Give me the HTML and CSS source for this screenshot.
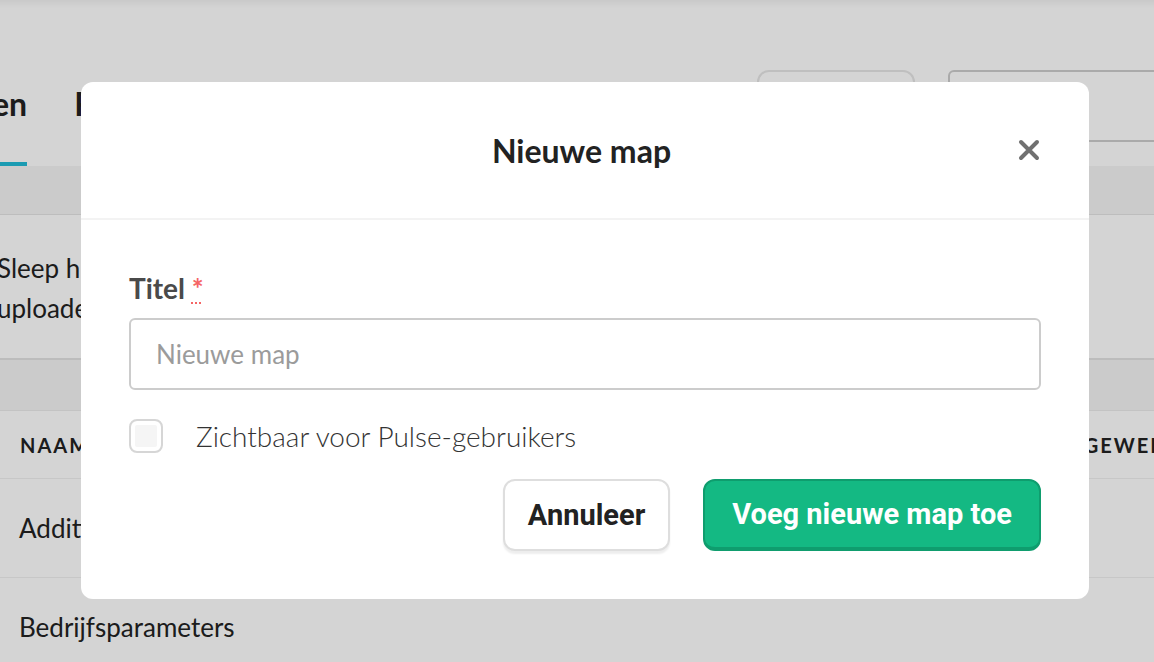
FILE: index.html
```html
<!DOCTYPE html>
<html lang="nl">
<head>
  <meta charset="UTF-8">
  <title>Nieuwe map</title>
  <link rel="stylesheet" href="styles.css">
</head>
<body>
  <div class="page">
    <header class="topbar">
      <nav class="tabs">
        <a class="tab active">en</a>
        <a class="tab">Formulieren</a>
      </nav>
      <div class="actions">
        <button class="ghost-btn" aria-label="Nieuwe map"></button>
        <input class="search" type="text">
      </div>
    </header>
    <div class="band"></div>
    <div class="dropzone">Sleep hier je bestanden naartoe om te<br>uploaden</div>
    <div class="band band-low"></div>
    <div class="table">
      <div class="row head">
        <span>Naam</span>
        <span>Laatst bijgewerkt</span>
      </div>
      <div class="row">
        <span>Additionele documenten</span>
        <span></span>
      </div>
      <div class="row">
        <span>Bedrijfsparameters</span>
        <span></span>
      </div>
    </div>
  </div>

  <div class="overlay">
    <div class="modal">
      <div class="modal-head">
        <h2>Nieuwe map</h2>
        <button class="close" aria-label="Sluiten">
          <svg width="22" height="22" viewBox="0 0 22 22"><path d="M3 3 L19 19 M19 3 L3 19" stroke="#707070" stroke-width="4" stroke-linecap="round"/></svg>
        </button>
      </div>
      <div class="modal-body">
        <label class="field-label" for="titel">Titel <abbr title="verplicht">*</abbr></label>
        <input id="titel" class="field" type="text" placeholder="Nieuwe map">
        <label class="check">
          <input type="checkbox">
          <span>Zichtbaar voor Pulse-gebruikers</span>
        </label>
        <div class="buttons">
          <button class="btn btn-cancel">Annuleer</button>
          <button class="btn btn-primary">Voeg nieuwe map toe</button>
        </div>
      </div>
    </div>
  </div>
</body>
</html>
```
FILE: styles.css
```css
html, body {
  margin: 0;
  height: 100%;
  overflow: hidden;
}

body {
  font-family: 'Lato', 'Open Sans', sans-serif;
  color: #222;
  background: #fff;
}

.page {width: 1180px;}

.topbar {
  display: flex;
  height: 166px;
}

.tabs {display: flex;margin-left: -8px;}

.tab {
  font-size: 32px;
  font-weight: 700;
  line-height: 40px;
  padding: 84px 0 38px;
  margin-right: 47px;
  border-bottom: 4px solid transparent;
  color: #222;
}
.tab.active {border-bottom-color: #21bbd6;}

.actions {
  margin-left: auto;
  display: flex;
  gap: 33px;
  padding-top: 70px;
}

.ghost-btn {
  width: 158px;
  height: 72px;
  border: 2px solid #e6e6e6;
  border-radius: 12px;
  background: #fff;
}

.search {
  width: 232px;
  height: 72px;
  box-sizing: border-box;
  border: 2px solid #cdcdcd;
  border-radius: 6px;
}

.band {
  height: 48px;
  background: #f5f5f5;
  border-bottom: 1px solid #e4e4e4;
}
.band-low {height: 50px;border-bottom-color: #ebebeb;}

.dropzone {
  font-size: 26px;
  line-height: 40px;
  padding: 33px 0 30px;
  margin-left: -3px;
  border-bottom: 2px solid #e2e2e2;
}

.row {
  display: grid;
  grid-template-columns: 940px auto;
  align-items: center;
  height: 98px;
  padding-left: 19px;
  font-size: 26px;
  white-space: nowrap;
  border-bottom: 1px solid #f0f0f0;
}
.row.head {
  height: 67px;
  padding-left: 20px;
  font-size: 20px;
  font-weight: 700;
  letter-spacing: 2px;
  text-transform: uppercase;
}

/* modal */
.overlay {
  position: fixed;
  inset: 0;
  background: linear-gradient(rgba(0,0,0,.05), rgba(0,0,0,0) 8px), rgba(0,0,0,.17);
  padding: 82px 0 0 81px;
}

.modal {
  width: 1008px;
  background: #fff;
  border-radius: 12px;
}

.modal-head {
  display: grid;
  grid-template-columns: 1fr auto 1fr;
  align-items: center;
  height: 136px;
  padding: 0 49px 0 42px;
  border-bottom: 2px solid #f3f3f3;
}
.modal-head h2 {
  grid-column: 2;
  margin: 0;
  font-size: 32px;
  font-weight: 700;
  color: #222;
}

.close {
  justify-self: end;
  border: 0;
  background: none;
  padding: 0;
  display: flex;
  cursor: pointer;
}

.modal-body {padding: 48px;}

.field-label {
  display: block;
  font-size: 28px;
  font-weight: 700;
  line-height: 40px;
  margin-bottom: 10px;
  color: #4a4a4a;
}
.field-label abbr {
  color: #f56565;
  text-decoration: underline dotted;
  text-decoration-thickness: 2px;
  text-underline-offset: 3px;
}

.field {
  display: block;
  width: 100%;
  height: 72px;
  box-sizing: border-box;
  border: 2px solid #cccccc;
  border-radius: 6px;
  padding: 0 25px;
  font: 26px 'Lato', sans-serif;
  color: #222;
}
.field::placeholder {color: #9b9b9b;}

.check {
  display: flex;
  align-items: center;
  height: 34px;
  margin-top: 29px;
  font-size: 28px;
  font-weight: 300;
  color: #333;
}
.check input {
  appearance: none;
  margin: 0 33px 0 0;
  width: 34px;
  height: 34px;
  border: 2px solid #d6d6d6;
  border-radius: 8px;
  background: #f5f5f5;
  box-shadow: inset 0 0 0 4px #fff;
}

.buttons {
  display: flex;
  justify-content: flex-end;
  gap: 33px;
  margin-top: 26px;
}

.btn {
  height: 72px;
  border-radius: 12px;
  font: 700 29px 'Roboto', sans-serif;
  cursor: pointer;
}
.btn-cancel {
  padding: 0 23px;
  background: #fff;
  color: #222;
  border: 2px solid #dedede;
  box-shadow: 0 3px 2px rgba(0,0,0,.07);
}
.btn-primary {
  padding: 0 27px;
  background: #14b983;
  color: #fff;
  border: 2px solid #0f9d6e;
  border-bottom-width: 4px;
}
```
